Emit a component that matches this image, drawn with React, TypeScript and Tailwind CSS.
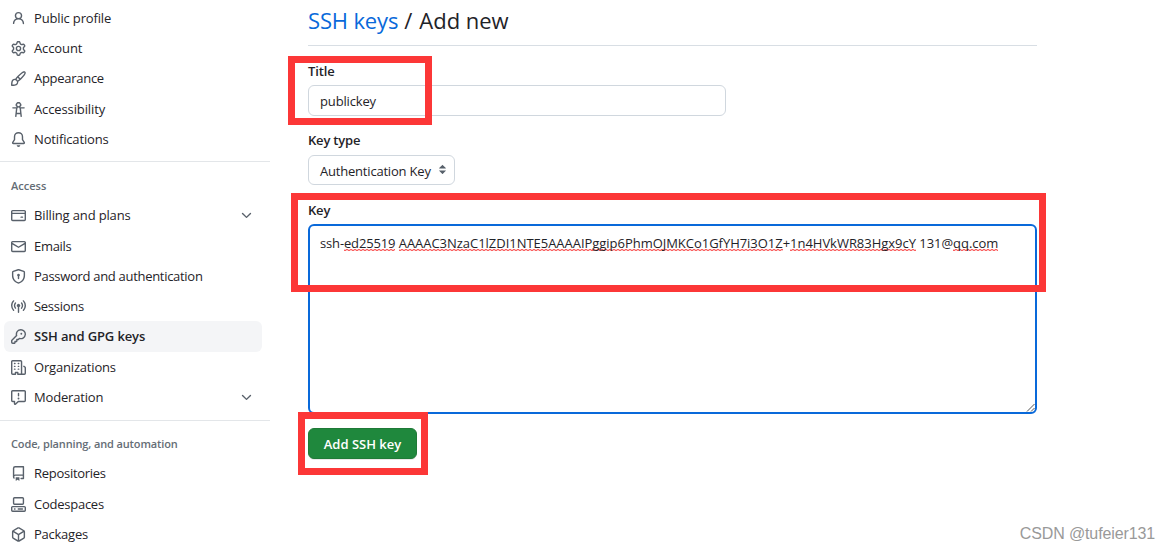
import type { ReactNode } from "react"

const icons = {
  person:
    "M10.561 8.073a6.005 6.005 0 0 1 3.432 5.142.75.75 0 1 1-1.498.07 4.5 4.5 0 0 0-8.99 0 .75.75 0 0 1-1.498-.07 6.004 6.004 0 0 1 3.431-5.142 3.999 3.999 0 1 1 5.123 0ZM10.5 5a2.5 2.5 0 1 0-5 0 2.5 2.5 0 0 0 5 0Z",
  gear: "M8 0a8.2 8.2 0 0 1 .701.031C9.444.095 9.99.645 10.16 1.29l.288 1.107c.018.066.079.158.212.224.231.114.454.243.668.386.123.082.233.09.299.071l1.103-.303c.644-.176 1.392.021 1.82.63.27.385.506.792.704 1.218.315.675.111 1.422-.364 1.891l-.814.806c-.049.048-.098.147-.088.294.016.257.016.515 0 .772-.01.147.038.246.088.294l.814.806c.475.469.679 1.216.364 1.891a7.977 7.977 0 0 1-.704 1.217c-.428.61-1.176.807-1.82.63l-1.102-.302c-.067-.019-.177-.011-.3.071a5.909 5.909 0 0 1-.668.386c-.133.066-.194.158-.211.224l-.29 1.106c-.168.646-.715 1.196-1.458 1.26a8.006 8.006 0 0 1-1.402 0c-.743-.064-1.289-.614-1.458-1.26l-.289-1.106c-.018-.066-.079-.158-.212-.224a5.738 5.738 0 0 1-.668-.386c-.123-.082-.233-.09-.299-.071l-1.103.303c-.644.176-1.392-.021-1.82-.63a8.12 8.12 0 0 1-.704-1.218c-.315-.675-.111-1.422.363-1.891l.815-.806c.05-.048.098-.147.088-.294a6.214 6.214 0 0 1 0-.772c.01-.147-.038-.246-.088-.294l-.815-.806C.635 6.045.431 5.298.746 4.623a7.92 7.92 0 0 1 .704-1.217c.428-.61 1.176-.807 1.82-.63l1.102.302c.067.019.177.011.3-.071.214-.143.437-.272.668-.386.133-.066.194-.158.211-.224l.29-1.106C6.009.645 6.556.095 7.299.03 7.53.01 7.764 0 8 0Zm-.571 1.525c-.036.003-.108.036-.137.146l-.289 1.105c-.147.561-.549.967-.998 1.189-.173.086-.34.183-.5.29-.417.278-.97.423-1.529.27l-1.103-.303c-.109-.03-.175.016-.195.045-.22.312-.412.644-.573.99-.014.031-.021.11.059.19l.815.806c.411.406.562.957.53 1.456a4.709 4.709 0 0 0 0 .582c.032.499-.119 1.05-.53 1.456l-.815.806c-.081.08-.073.159-.059.19.162.346.353.677.573.989.02.03.085.076.195.046l1.102-.303c.56-.153 1.113-.008 1.53.27.161.107.328.204.501.29.447.222.85.629.997 1.189l.289 1.105c.029.109.101.143.137.146a6.6 6.6 0 0 0 1.142 0c.036-.003.108-.036.137-.146l.289-1.105c.147-.561.549-.967.998-1.189.173-.086.34-.183.5-.29.417-.278.97-.423 1.529-.27l1.103.303c.109.029.175-.016.195-.045.22-.313.411-.644.573-.99.014-.031.021-.11-.059-.19l-.815-.806c-.411-.406-.562-.957-.53-1.456a4.709 4.709 0 0 0 0-.582c-.032-.499.119-1.05.53-1.456l.815-.806c.081-.08.073-.159.059-.19a6.464 6.464 0 0 0-.573-.989c-.02-.03-.085-.076-.195-.046l-1.102.303c-.56.153-1.113.008-1.53-.27a4.44 4.44 0 0 0-.501-.29c-.447-.222-.85-.629-.997-1.189l-.289-1.105c-.029-.11-.101-.143-.137-.146a6.6 6.6 0 0 0-1.142 0ZM11 8a3 3 0 1 1-6 0 3 3 0 0 1 6 0ZM9.5 8a1.5 1.5 0 1 0-3.001.001A1.5 1.5 0 0 0 9.5 8Z",
  paintbrush:
    "M11.134 1.535c.7-.509 1.416-.942 2.076-1.155.649-.21 1.463-.267 2.069.34.603.601.568 1.411.368 2.07-.202.668-.624 1.39-1.125 2.096-1.011 1.424-2.496 2.987-3.775 4.249-1.098 1.084-2.132 1.839-3.04 2.3a3.744 3.744 0 0 1-1.055 3.217c-.431.431-1.065.691-1.657.861-.614.177-1.294.287-1.914.357A21.151 21.151 0 0 1 .797 16H.743l.007-.75H.749L.742 16a.75.75 0 0 1-.743-.742l.743-.008-.742.007v-.054a21.25 21.25 0 0 1 .13-2.284c.067-.647.187-1.287.358-1.914.17-.591.43-1.226.86-1.657a3.746 3.746 0 0 1 3.227-1.054c.466-.893 1.225-1.907 2.314-2.982 1.271-1.255 2.833-2.75 4.245-3.777ZM1.62 13.089c-.051.464-.086.929-.104 1.395.466-.018.932-.053 1.396-.104a10.511 10.511 0 0 0 1.668-.309c.526-.151.856-.325 1.011-.48a2.25 2.25 0 1 0-3.182-3.182c-.155.155-.329.485-.48 1.01a10.515 10.515 0 0 0-.309 1.67Zm10.396-10.34c-1.224.89-2.605 2.189-3.822 3.384l1.718 1.718c1.21-1.205 2.51-2.597 3.387-3.833.47-.662.78-1.227.912-1.662.134-.444.032-.551.009-.575h-.001V1.78c-.014-.014-.113-.113-.548.027-.432.14-.995.462-1.655.942Zm-4.832 7.266-.001.001a9.859 9.859 0 0 0 1.63-1.142L7.155 7.216a9.7 9.7 0 0 0-1.161 1.607c.482.302.889.71 1.19 1.192Z",
  accessibility:
    "M9.923 5.302c.063.063.122.129.178.198H14A.75.75 0 0 1 14 7h-3.3l.578 5.163.362 2.997a.75.75 0 0 1-1.49.18L9.868 13H6.132l-.282 2.34a.75.75 0 0 1-1.49-.18l.362-2.997L5.3 7H2a.75.75 0 0 1 0-1.5h3.9a2.54 2.54 0 0 1 .176-.198 3 3 0 1 1 3.847 0ZM9.2 7.073h-.001a1.206 1.206 0 0 0-2.398 0L6.305 11.5h3.39ZM9.5 3a1.5 1.5 0 1 0-3.001.001A1.5 1.5 0 0 0 9.5 3Z",
  bell: "M8 16a2 2 0 0 0 1.985-1.75c.017-.137-.097-.25-.235-.25h-3.5c-.138 0-.252.113-.235.25A2 2 0 0 0 8 16ZM3 5a5 5 0 0 1 10 0v2.947c0 .05.015.098.042.139l1.703 2.555A1.519 1.519 0 0 1 13.482 13H2.518a1.516 1.516 0 0 1-1.263-2.36l1.703-2.554A.255.255 0 0 0 3 7.947Zm5-3.5A3.5 3.5 0 0 0 4.5 5v2.947c0 .346-.102.683-.294.97l-1.703 2.556a.017.017 0 0 0-.003.01l.001.006c0 .002.002.004.004.006l.006.004.007.001h10.964l.007-.001.006-.004.004-.006.001-.007a.017.017 0 0 0-.003-.01l-1.703-2.554a1.745 1.745 0 0 1-.294-.97V5A3.5 3.5 0 0 0 8 1.5Z",
  creditCard:
    "M10.75 9a.75.75 0 0 0 0 1.5h1.5a.75.75 0 0 0 0-1.5h-1.5ZM0 3.75C0 2.784.784 2 1.75 2h12.5c.966 0 1.75.784 1.75 1.75v8.5A1.75 1.75 0 0 1 14.25 14H1.75A1.75 1.75 0 0 1 0 12.25ZM14.5 6.5h-13v5.75c0 .138.112.25.25.25h12.5a.25.25 0 0 0 .25-.25Zm0-2.75a.25.25 0 0 0-.25-.25H1.75a.25.25 0 0 0-.25.25V5h13Z",
  mail: "M1.75 2h12.5c.966 0 1.75.784 1.75 1.75v8.5A1.75 1.75 0 0 1 14.25 14H1.75A1.75 1.75 0 0 1 0 12.25v-8.5C0 2.784.784 2 1.75 2ZM1.5 12.251c0 .138.112.25.25.25h12.5a.25.25 0 0 0 .25-.25V5.809L8.38 9.397a.75.75 0 0 1-.76 0L1.5 5.809v6.442Zm13-8.181v-.32a.25.25 0 0 0-.25-.25H1.75a.25.25 0 0 0-.25.25v.32L8 7.88Z",
  shieldLock:
    "m8.533.133 5.25 1.68A1.75 1.75 0 0 1 15 3.48V7c0 1.566-.32 3.182-1.303 4.682-.983 1.498-2.585 2.813-5.032 3.855a1.697 1.697 0 0 1-1.33 0c-2.447-1.042-4.049-2.357-5.032-3.855C1.32 10.182 1 8.566 1 7V3.48a1.75 1.75 0 0 1 1.217-1.667l5.25-1.68a1.748 1.748 0 0 1 1.066 0Zm-.61 1.429.001.001-5.25 1.68a.251.251 0 0 0-.174.237V7c0 1.36.275 2.666 1.057 3.859.784 1.194 2.121 2.342 4.366 3.298a.196.196 0 0 0 .154 0c2.245-.957 3.582-2.103 4.366-3.297C13.225 9.666 13.5 8.358 13.5 7V3.48a.25.25 0 0 0-.174-.238l-5.25-1.68a.25.25 0 0 0-.153 0ZM9.5 6.5c0 .536-.286 1.032-.75 1.3v2.45a.75.75 0 0 1-1.5 0V7.8A1.5 1.5 0 1 1 9.5 6.5Z",
  broadcast:
    "M8.75 8.582v5.668a.75.75 0 0 1-1.5 0V8.582a1.75 1.75 0 1 1 1.5 0Zm3.983-7.125a.75.75 0 0 1 1.06.026A7.976 7.976 0 0 1 16 7c0 2.139-.84 4.083-2.207 5.517a.75.75 0 1 1-1.086-1.034A6.474 6.474 0 0 0 14.5 7a6.474 6.474 0 0 0-1.793-4.483.75.75 0 0 1 .026-1.06Zm-9.466 0c.3.286.312.76.026 1.06A6.474 6.474 0 0 0 1.5 7a6.47 6.47 0 0 0 1.793 4.483.75.75 0 0 1-1.086 1.034A7.973 7.973 0 0 1 0 7c0-2.139.84-4.083 2.207-5.517a.75.75 0 0 1 1.06-.026Zm8.556 2.321A4.988 4.988 0 0 1 13 7a4.988 4.988 0 0 1-1.177 3.222.75.75 0 1 1-1.146-.967A3.487 3.487 0 0 0 11.5 7c0-.86-.309-1.645-.823-2.255a.75.75 0 0 1 1.146-.967Zm-6.492.958A3.48 3.48 0 0 0 4.5 7a3.48 3.48 0 0 0 .823 2.255.75.75 0 0 1-1.146.967A4.981 4.981 0 0 1 3 7a4.982 4.982 0 0 1 1.188-3.236.75.75 0 1 1 1.143.972Z",
  key: "M10.5 0a5.499 5.499 0 1 1-1.288 10.848l-.932.932a.749.749 0 0 1-.53.22H7v.75a.749.749 0 0 1-.22.53l-.5.5a.749.749 0 0 1-.53.22H5v.75a.749.749 0 0 1-.22.53l-.5.5a.749.749 0 0 1-.53.22h-2A1.75 1.75 0 0 1 0 14.25v-2c0-.199.079-.389.22-.53l4.932-4.932A5.5 5.5 0 0 1 10.5 0Zm-4 5.5c-.001.431.069.86.205 1.269a.75.75 0 0 1-.181.768L1.5 12.56v1.69c0 .138.112.25.25.25h1.69l.06-.06v-1.19a.75.75 0 0 1 .75-.75h1.19l.06-.06v-1.19a.75.75 0 0 1 .75-.75h1.19l1.023-1.025a.75.75 0 0 1 .768-.18A4 4 0 1 0 6.5 5.5ZM11 6a1 1 0 1 1 0-2 1 1 0 0 1 0 2Z",
  organization:
    "M1.75 16A1.75 1.75 0 0 1 0 14.25V1.75C0 .784.784 0 1.75 0h8.5C11.216 0 12 .784 12 1.75v12.5c0 .085-.006.168-.018.25h2.268a.25.25 0 0 0 .25-.25V8.285a.25.25 0 0 0-.111-.208l-1.055-.703a.749.749 0 1 1 .832-1.248l1.055.703c.487.325.779.871.779 1.456v5.965A1.75 1.75 0 0 1 14.25 16h-3.5a.766.766 0 0 1-.197-.026c-.099.017-.2.026-.303.026h-3a.75.75 0 0 1-.75-.75V14h-1v1.25a.75.75 0 0 1-.75.75Zm-.25-1.75c0 .138.112.25.25.25H4v-1.25a.75.75 0 0 1 .75-.75h2.5a.75.75 0 0 1 .75.75v1.25h2.25a.25.25 0 0 0 .25-.25V1.75a.25.25 0 0 0-.25-.25h-8.5a.25.25 0 0 0-.25.25ZM3.75 6h.5a.75.75 0 0 1 0 1.5h-.5a.75.75 0 0 1 0-1.5ZM3 3.75A.75.75 0 0 1 3.75 3h.5a.75.75 0 0 1 0 1.5h-.5A.75.75 0 0 1 3 3.75Zm4 3A.75.75 0 0 1 7.75 6h.5a.75.75 0 0 1 0 1.5h-.5A.75.75 0 0 1 7 6.75ZM7.75 3h.5a.75.75 0 0 1 0 1.5h-.5a.75.75 0 0 1 0-1.5ZM3 9.75A.75.75 0 0 1 3.75 9h.5a.75.75 0 0 1 0 1.5h-.5A.75.75 0 0 1 3 9.75ZM7.75 9h.5a.75.75 0 0 1 0 1.5h-.5a.75.75 0 0 1 0-1.5Z",
  report:
    "M0 1.75C0 .784.784 0 1.75 0h12.5C15.216 0 16 .784 16 1.75v9.5A1.75 1.75 0 0 1 14.25 13H8.06l-2.573 2.573A1.458 1.458 0 0 1 3 14.543V13H1.75A1.75 1.75 0 0 1 0 11.25Zm1.75-.25a.25.25 0 0 0-.25.25v9.5c0 .138.112.25.25.25h2a.75.75 0 0 1 .75.75v2.19l2.72-2.72a.749.749 0 0 1 .53-.22h6.5a.25.25 0 0 0 .25-.25v-9.5a.25.25 0 0 0-.25-.25Zm7 2.25v2.5a.75.75 0 0 1-1.5 0v-2.5a.75.75 0 0 1 1.5 0ZM9 9a1 1 0 1 1-2 0 1 1 0 0 1 2 0Z",
  repo: "M2 2.5A2.5 2.5 0 0 1 4.5 0h8.75a.75.75 0 0 1 .75.75v12.5a.75.75 0 0 1-.75.75h-2.5a.75.75 0 0 1 0-1.5h1.75v-2h-8a1 1 0 0 0-.714 1.7.75.75 0 1 1-1.072 1.05A2.495 2.495 0 0 1 2 11.5Zm10.5-1h-8a1 1 0 0 0-1 1v6.708A2.486 2.486 0 0 1 4.5 9h8ZM5 12.25a.25.25 0 0 1 .25-.25h3.5a.25.25 0 0 1 .25.25v3.25a.25.25 0 0 1-.4.2l-1.45-1.087a.249.249 0 0 0-.3 0L5.4 15.7a.25.25 0 0 1-.4-.2Z",
  codespaces:
    "M0 11.25c0-.966.784-1.75 1.75-1.75h12.5c.966 0 1.75.784 1.75 1.75v3A1.75 1.75 0 0 1 14.25 16H1.75A1.75 1.75 0 0 1 0 14.25Zm2-9.5C2 .784 2.784 0 3.75 0h8.5C13.216 0 14 .784 14 1.75v5a1.75 1.75 0 0 1-1.75 1.75h-8.5A1.75 1.75 0 0 1 2 6.75Zm1.75-.25a.25.25 0 0 0-.25.25v5c0 .138.112.25.25.25h8.5a.25.25 0 0 0 .25-.25v-5a.25.25 0 0 0-.25-.25Zm-2 9.5a.25.25 0 0 0-.25.25v3c0 .138.112.25.25.25h12.5a.25.25 0 0 0 .25-.25v-3a.25.25 0 0 0-.25-.25ZM7 12.75a.75.75 0 0 1 .75-.75h4.5a.75.75 0 0 1 0 1.5h-4.5a.75.75 0 0 1-.75-.75Zm-4 0a.75.75 0 0 1 .75-.75h.5a.75.75 0 0 1 0 1.5h-.5a.75.75 0 0 1-.75-.75Z",
  package:
    "m8.878.392 5.25 3.045c.54.314.872.89.872 1.514v6.098a1.75 1.75 0 0 1-.872 1.514l-5.25 3.045a1.75 1.75 0 0 1-1.756 0l-5.25-3.045A1.75 1.75 0 0 1 1 11.049V4.951c0-.624.332-1.201.872-1.514L7.122.392a1.75 1.75 0 0 1 1.756 0ZM7.875 1.69l-4.63 2.685L8 7.133l4.755-2.758-4.63-2.685a.248.248 0 0 0-.25 0ZM2.5 5.677v5.372c0 .09.047.171.125.216l4.625 2.683V8.432Zm6.25 8.271 4.625-2.683a.25.25 0 0 0 .125-.216V5.677L8.75 8.432Z",
  chevronDown:
    "M12.78 5.22a.749.749 0 0 1 0 1.06l-4.25 4.25a.749.749 0 0 1-1.06 0L3.22 6.28a.749.749 0 1 1 1.06-1.06L8 8.939l3.72-3.719a.749.749 0 0 1 1.06 0Z",
  select:
    "m4.427 9.427 3.396 3.396a.251.251 0 0 0 .354 0l3.396-3.396A.25.25 0 0 0 11.396 9H4.604a.25.25 0 0 0-.177.427ZM4.423 6.47 7.82 3.072a.25.25 0 0 1 .354 0L11.57 6.47a.25.25 0 0 1-.177.427H4.6a.25.25 0 0 1-.177-.427Z",
}

type IconName = keyof typeof icons

type Item = {
  label: string
  icon: IconName
  text: string
  active?: boolean
  expandable?: boolean
}

const profileItems: Item[] = [
  { label: "Public profile", icon: "person", text: "tracking-[-0.15px]" },
  { label: "Account", icon: "gear", text: "tracking-[-0.1px]" },
  { label: "Appearance", icon: "paintbrush", text: "tracking-[-0.28px]" },
  { label: "Accessibility", icon: "accessibility", text: "tracking-[-0.12px]" },
  { label: "Notifications", icon: "bell", text: "tracking-[-0.15px]" },
]

const accessItems: Item[] = [
  { label: "Billing and plans", icon: "creditCard", text: "tracking-[-0.15px]", expandable: true },
  { label: "Emails", icon: "mail", text: "tracking-[-0.3px]" },
  { label: "Password and authentication", icon: "shieldLock", text: "tracking-[-0.3px]" },
  { label: "Sessions", icon: "broadcast", text: "tracking-[-0.28px]" },
  { label: "SSH and GPG keys", icon: "key", text: "tracking-[-0.13px]", active: true },
  { label: "Organizations", icon: "organization", text: "tracking-[-0.18px]" },
  { label: "Moderation", icon: "report", text: "tracking-[-0.18px]", expandable: true },
]

const codeItems: Item[] = [
  { label: "Repositories", icon: "repo", text: "tracking-[-0.28px]" },
  { label: "Codespaces", icon: "codespaces", text: "tracking-[-0.25px]" },
  { label: "Packages", icon: "package", text: "tracking-[-0.25px]" },
]

function Icon({ name, className }: { name: IconName; className: string }) {
  return (
    <svg viewBox="0 0 16 16" fill="currentColor" className={`shrink-0 ${className}`}>
      <path d={icons[name]} />
    </svg>
  )
}

function NavList({ items }: { items: Item[] }) {
  return (
    <ul className="pl-1 pr-2">
      {items.map((item) => (
        <li
          key={item.label}
          className={`flex h-[30.3px] items-center rounded-md pl-[7px] pr-2 ${
            item.active ? "bg-[#f4f5f7] font-semibold" : ""
          }`}
        >
          <Icon name={item.icon} className="mt-px size-[15px] text-[#59616b]" />
          <span className={`ml-2 flex-1 whitespace-nowrap ${item.text}`}>{item.label}</span>
          {item.expandable && <Icon name="chevronDown" className="mt-px size-[15px] text-[#59616b]" />}
        </li>
      ))}
    </ul>
  )
}

// two 1px rows of staggered dashes, like a spellcheck squiggle
function Misspelled({ children }: { children: ReactNode }) {
  return (
    <span className="inline-block h-[18px] bg-[linear-gradient(90deg,#f96060_2px,#fcc4c4_2px),linear-gradient(90deg,#fcc4c4_2px,#f96060_2px)] bg-[length:4px_1px] bg-[position:0_100%,0_calc(100%_-_1px)] bg-repeat-x">
      {children}
    </span>
  )
}

export default function App() {
  return (
    <div className="relative flex h-[549px] w-[1170px] overflow-hidden bg-white font-['Open_Sans','Noto_Sans',sans-serif] text-[13px] leading-5 text-[#1f2328]">
      <nav className="w-[270px] shrink-0 pt-[2.6px]">
        <NavList items={profileItems} />
        <hr className="mt-[6.9px] border-[#e3e6e9]" />
        <h3 className="mb-[4.15px] mt-[14px] pl-[11px] text-[11px] font-semibold text-[#656d76]">Access</h3>
        <NavList items={accessItems} />
        <hr className="mt-[7.45px] border-[#e3e6e9]" />
        <h3 className="mb-[4.3px] mt-[13.2px] pl-[11px] text-[11px] font-semibold tracking-[-0.13px] text-[#656d76]">
          Code, planning, and automation
        </h3>
        <NavList items={codeItems} />
      </nav>

      <main className="ml-[38px] w-[729px]">
        <h2 className="flex h-[46px] items-center gap-[6px] border-b border-[#d8dee4] pb-[5px] text-[22px] leading-8">
          <a className="tracking-[-0.15px] text-[#0969da]">SSH keys</a>
          <span>/</span>
          <span className="pl-px tracking-[-0.05px]">Add new</span>
        </h2>

        <form>
          <label className="mt-[15px] block font-semibold tracking-[-0.1px]">Title</label>
          <input
            defaultValue="publickey"
            className="mt-1 block h-[31px] w-[418px] rounded-md border border-[#d0d7de] px-[11px] tracking-[-0.15px] outline-none"
          />

          <label className="mt-[14px] block font-semibold tracking-[-0.2px]">Key type</label>
          <div className="mt-[5px] flex h-[30px] w-[147px] items-center rounded-md border border-[#d0d7de] pl-[11px] pr-1">
            <span className="flex-1 whitespace-nowrap pt-px tracking-[-0.2px]">Authentication Key</span>
            <Icon name="select" className="mb-0.5 size-[15px] text-[#57606a]" />
          </div>

          <label className="mt-[15px] block font-semibold tracking-[-0.2px]">Key</label>
          <div className="relative mt-1 h-[190px] w-[729px] rounded-md border-2 border-[#0969da] px-[10px] py-[7px]">
            <p className="whitespace-nowrap tracking-[-0.03px]">
              <span className="tracking-[-0.15px]">
                ssh-<Misspelled>ed25519</Misspelled>
              </span>{" "}
              <Misspelled>AAAAC3NzaC1lZDI1NTE5AAAAIPggip6PhmOJMKCo1GfYH7i3O1Z</Misspelled>+
              <Misspelled>1n4HVkWR83Hgx9cY</Misspelled> 131@<Misspelled>qq.com</Misspelled>
            </p>
            <svg viewBox="0 0 9 9" className="absolute bottom-0 right-0 size-[9px]" stroke="#555" fill="none">
              <path d="M1 8.5 8.5 1M5 8.5 8.5 5" />
            </svg>
          </div>

          <button
            type="button"
            className="mt-[14px] block h-[31px] w-[109px] rounded-md border border-[#1f7a37] bg-[#1f883d] font-semibold text-white shadow-[0_1px_0_rgba(31,35,40,0.1)]"
          >
            Add SSH key
          </button>
        </form>
      </main>

      {/* highlight frames */}
      <div className="absolute left-[288px] top-[56px] h-[69px] w-[144px] border-[7px] border-[#fc3737]" />
      <div className="absolute left-[291px] top-[193px] h-[99px] w-[755px] border-[7px] border-[#fc3737]" />
      <div className="absolute left-[298px] top-[412px] h-[63px] w-[130px] border-[7px] border-[#fc3737]" />

      <span className="absolute bottom-[5px] right-[15px] whitespace-nowrap font-['Liberation_Sans',sans-serif] text-[16px] tracking-[-0.12px] text-[#999]">
        CSDN @tufeier131
      </span>
    </div>
  )
}
